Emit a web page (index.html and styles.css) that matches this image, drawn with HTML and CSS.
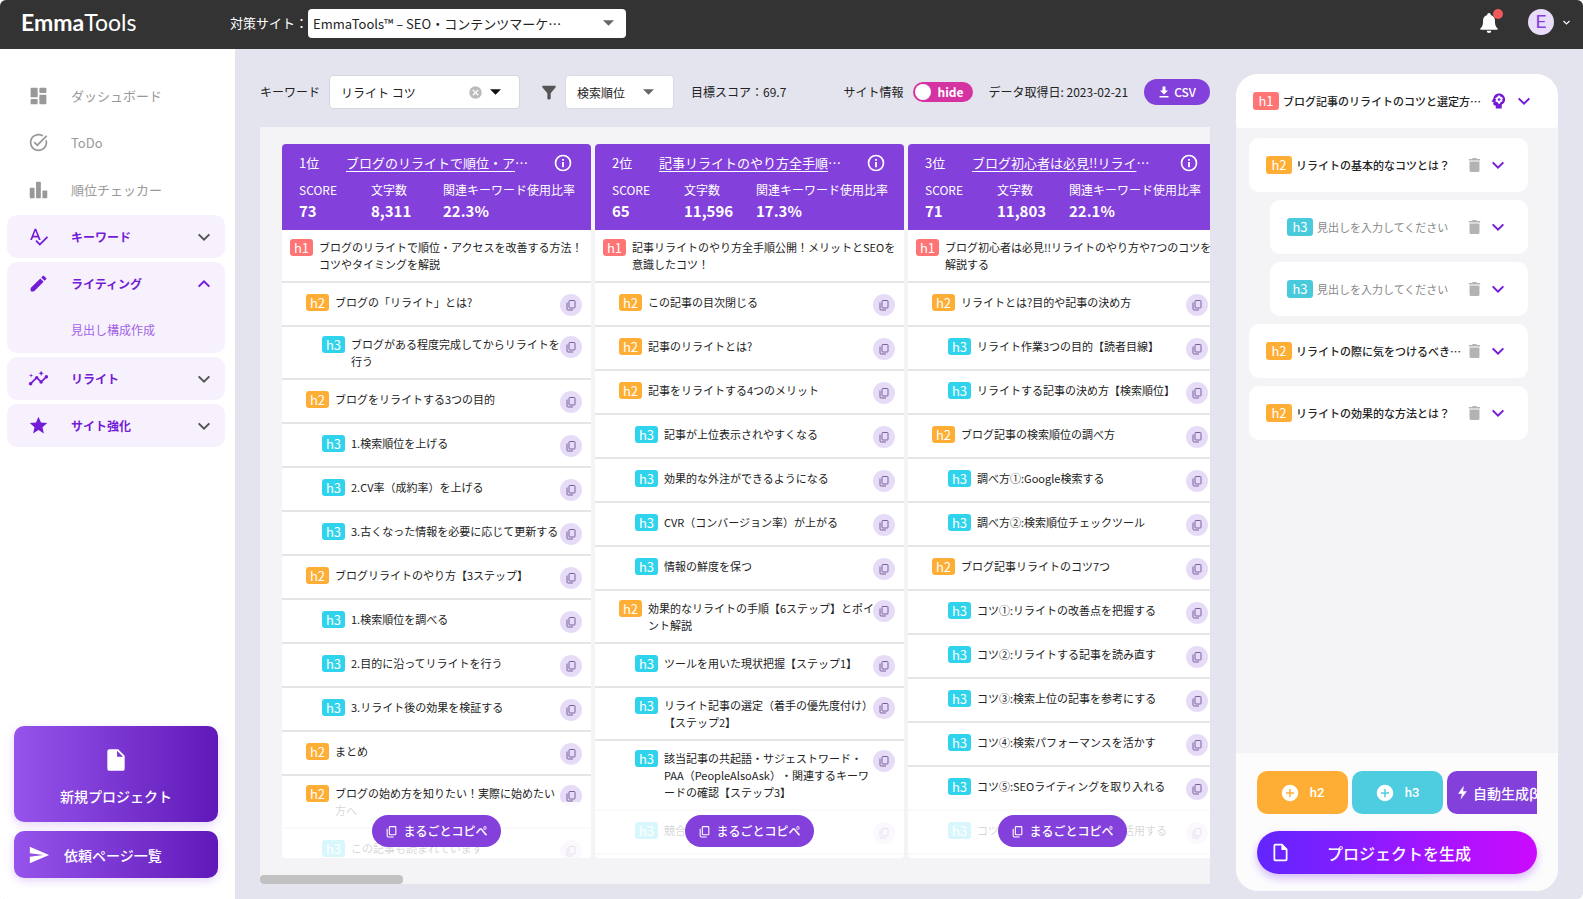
FILE: index.html
```html
<!DOCTYPE html>
<html lang="ja">
<head>
<meta charset="utf-8">
<title>EmmaTools</title>
<link rel="stylesheet" href="styles.css">
</head>
<body>
<svg class="sprite" aria-hidden="true">
  <symbol id="dash" viewBox="0 0 24 24"><rect x="3" y="3" width="8" height="11" rx="1"/><rect x="13" y="3" width="8" height="6" rx="1"/><rect x="3" y="16" width="8" height="6" rx="1"/><rect x="13" y="11" width="8" height="11" rx="1"/></symbol>
  <symbol id="task" viewBox="0 0 24 24"><path d="M22 5.18 10.59 16.6l-4.24-4.24 1.41-1.41 2.83 2.83 10-10L22 5.18zM19.79 10.22c.13.57.21 1.17.21 1.78 0 4.42-3.58 8-8 8s-8-3.58-8-8c0-4.42 3.58-8 8-8 1.58 0 3.04.46 4.28 1.25l1.44-1.44C16.1 2.67 14.13 2 12 2 6.48 2 2 6.48 2 12s4.48 10 10 10 10-4.48 10-10c0-1.19-.22-2.33-.6-3.39l-1.61 1.61z"/></symbol>
  <symbol id="bars" viewBox="0 0 24 24"><rect x="2" y="10" width="5.500" height="12" rx="1"/><rect x="9.200" y="3" width="5.500" height="19" rx="1"/><rect x="16.500" y="13" width="5.500" height="9" rx="1"/></symbol>
  <symbol id="spell" viewBox="0 0 24 24"><path d="M12.450 16h2.090L9.430 3H7.570L2.460 16h2.090l1.120-3h5.640l1.140 3zm-6.020-5L8.500 5.480 10.570 11H6.430zm15.160.590-8.090 8.090L9.830 16l-1.410 1.410 5.090 5.090L23 13l-1.410-1.410z"/></symbol>
  <symbol id="pencil" viewBox="0 0 24 24"><path d="M3 17.250V20a1 1 0 0 0 1 1h2.750L17.810 9.940l-3.750-3.750L3 17.250zM20.710 7.040a1 1 0 0 0 0-1.410l-2.340-2.340a1 1 0 0 0-1.410 0l-1.830 1.830 3.750 3.750 1.830-1.830z"/></symbol>
  <symbol id="insights" viewBox="0 0 24 24"><path d="M21 8c-1.45 0-2.26 1.44-1.93 2.51l-3.55 3.56c-.3-.09-.74-.09-1.04 0l-2.55-2.55C12.27 10.45 11.46 9 10 9c-1.45 0-2.27 1.44-1.93 2.52l-4.56 4.55C2.44 15.74 1 16.55 1 18c0 1.1.9 2 2 2 1.45 0 2.26-1.44 1.93-2.51l4.55-4.56c.3.09.74.09 1.04 0l2.55 2.55C12.73 16.55 13.54 18 15 18c1.45 0 2.27-1.44 1.93-2.52l3.56-3.55c1.07.33 2.51-.48 2.51-1.93 0-1.1-.9-2-2-2zM15 9l.94-2.07L18 6l-2.06-.93L15 3l-.92 2.07L12 6l2.08.93zM3.5 11 4 9l2-.5L4 8l-.5-2L3 8l-2 .5L3 9z"/></symbol>
  <symbol id="star" viewBox="0 0 24 24"><path d="M12 17.270 18.180 21l-1.640-7.030L22 9.240l-7.190-.610L12 2 9.190 8.630 2 9.240l5.460 4.730L5.820 21z"/></symbol>
  <symbol id="file" viewBox="0 0 24 24"><path d="M14 2H6a2 2 0 0 0-2 2v16a2 2 0 0 0 2 2h12a2 2 0 0 0 2-2V8l-6-6zm-1 7V3.500L18.500 9H13z"/></symbol>
  <symbol id="file-line" viewBox="0 0 24 24"><path fill-rule="evenodd" d="M14 2H6a2 2 0 0 0-2 2v16a2 2 0 0 0 2 2h12a2 2 0 0 0 2-2V8l-6-6zM6 4h7v5h5v11H6V4z"/></symbol>
  <symbol id="send" viewBox="0 0 24 24"><path d="M2 21l21-9L2 3v7l15 2-15 2z"/></symbol>
  <symbol id="copy" viewBox="0 0 24 24"><rect x="8" y="3" width="12" height="15" rx="1.500" fill="none" stroke="currentColor" stroke-width="2"/><path d="M4 7v13a2 2 0 0 0 2 2h10" fill="none" stroke="currentColor" stroke-width="2"/></symbol>
  <symbol id="info" viewBox="0 0 24 24"><circle cx="12" cy="12" r="10" fill="none" stroke="currentColor" stroke-width="2.200"/><path d="M10.800 10.500h2.400v7h-2.400zM10.800 6.500h2.400v2.400h-2.400z"/></symbol>
  <symbol id="down" viewBox="0 0 24 24"><path d="M4 8l8 8 8-8" fill="none" stroke="currentColor" stroke-width="3"/></symbol>
  <symbol id="up" viewBox="0 0 24 24"><path d="M4 16l8-8 8 8" fill="none" stroke="currentColor" stroke-width="3"/></symbol>
  <symbol id="tri" viewBox="0 0 12 6"><path d="M0 0h12L6 6z"/></symbol>
  <symbol id="clear" viewBox="0 0 24 24"><path d="M12 2a10 10 0 1 0 0 20 10 10 0 0 0 0-20zm5 13.600L15.600 17 12 13.400 8.400 17 7 15.600l3.600-3.600L7 8.400 8.400 7l3.600 3.600L15.600 7 17 8.400 13.400 12z"/></symbol>
  <symbol id="filter" viewBox="0 0 24 24"><path d="M2 2h20v2l-7.500 9v8.500L12 23l-2.500-1.500V13L2 4z"/></symbol>
  <symbol id="download" viewBox="0 0 24 24"><path d="M9 1h6v8h5l-8 8-8-8h5zM3 20h18v3H3z"/></symbol>
  <symbol id="bolt" viewBox="0 0 24 24"><path d="M14 1 5 14h6l-2 9 10-13h-6z"/></symbol>
  <symbol id="plus" viewBox="0 0 24 24"><path d="M12 1a11 11 0 1 0 0 22 11 11 0 0 0 0-22zm5.500 12H13v4.500h-2V13H6.500v-2H11V6.500h2V11h4.500z"/></symbol>
  <symbol id="trash" viewBox="0 0 24 24"><path d="M20 3.500h-4.500L14.500 2h-5l-1 1.500H4V5.500h16zM5 20a2 2 0 0 0 2 2h10a2 2 0 0 0 2-2V7H5z"/></symbol>
  <symbol id="bell" viewBox="0 0 24 24"><path d="M12 1a2 2 0 0 0-2 2v.400A6.500 6.500 0 0 0 5.500 10c0 4-.8 6-2.500 7.500-.8.700-.8 1.900.3 1.900h17.400c1.100 0 1.100-1.200.3-1.900-1.700-1.500-2.500-3.500-2.500-7.500A6.500 6.500 0 0 0 14 3.400V3a2 2 0 0 0-2-2zM9.500 20.500h5a2.500 2.500 0 0 1-5 0z"/></symbol>
  <symbol id="brain" viewBox="0 0 24 24"><path d="M13.500 2C9.400 2 6 5 5.800 9L3.600 12.200c-.3.400 0 .9.400.9h1.800V16c0 1.100.9 2 2 2H9v4h8v-5.300c2.700-1.300 4.500-3.800 4.500-6.700 0-4.400-3.600-8-8-8z"/><g fill="#fff"><circle cx="13.500" cy="10" r="4.200"/><path d="M12.300 4.500h2.400v11h-2.400zM8 9l.5-1 9.500 2.900-.4 1.300zM17.800 7.300l.8 1.500-9.400 4.400-.8-1.400z"/></g><circle cx="13.500" cy="10" r="1.800"/></symbol>
</svg>
<div class="app">
  <header class="topbar">
    <div class="logo"><b>Emma</b>Tools</div>
    <div class="site">
      <label for="site">対策サイト：</label>
      <div class="pick pick-site">
        <select id="site"><option>EmmaTools™ – SEO・コンテンツマーケ…</option></select>
        <svg class="caret"><use href="#tri"/></svg>
      </div>
    </div>
    <div class="account">
      <button class="bell" aria-label="通知"><svg><use href="#bell"/></svg><span class="dot"></span></button>
      <button class="user" aria-label="アカウント"><span class="avatar">E</span><svg><use href="#down"/></svg></button>
    </div>
  </header>
  <div class="body">
    <aside class="sidebar">
      <nav class="menu">
        <a class="item" href="#"><svg><use href="#dash"/></svg><span>ダッシュボード</span></a>
        <a class="item" href="#"><svg><use href="#task"/></svg><span>ToDo</span></a>
        <a class="item" href="#"><svg><use href="#bars"/></svg><span>順位チェッカー</span></a>
        <div class="group"><button class="item"><svg><use href="#spell"/></svg><span>キーワード</span><svg class="arrow"><use href="#down"/></svg></button></div>
        <div class="group"><button class="item open"><svg><use href="#pencil"/></svg><span>ライティング</span><svg class="arrow"><use href="#up"/></svg></button><a class="sub" href="#">見出し構成作成</a></div>
        <div class="group"><button class="item"><svg><use href="#insights"/></svg><span>リライト</span><svg class="arrow"><use href="#down"/></svg></button></div>
        <div class="group"><button class="item"><svg><use href="#star"/></svg><span>サイト強化</span><svg class="arrow"><use href="#down"/></svg></button></div>
      </nav>
      <div class="side-actions">
        <button class="grad new-project"><svg><use href="#file"/></svg><span>新規プロジェクト</span></button>
        <button class="grad request"><svg><use href="#send"/></svg><span>依頼ページ一覧</span></button>
      </div>
    </aside>
    <main class="main">
      <div class="toolbar">
        <label for="kw">キーワード</label>
        <div class="kw-box"><input id="kw" type="text" value="リライト コツ"><button class="clear" aria-label="消去"><svg><use href="#clear"/></svg></button><svg class="caret"><use href="#tri"/></svg></div>
        <svg class="filter"><use href="#filter"/></svg>
        <div class="pick pick-sort"><select aria-label="並び順"><option>検索順位</option></select><svg class="caret"><use href="#tri"/></svg></div>
        <span class="target">目標スコア：69.7</span>
        <div class="tool-right">
          <label class="switch"><span>サイト情報</span><input type="checkbox" role="switch"><span class="track"><span class="knob"></span>hide</span></label>
          <span>データ取得日: 2023-02-21</span>
          <button class="csv"><svg><use href="#download"/></svg>CSV</button>
        </div>
      </div>
      <section class="board">
        <div class="columns">
          <article class="col">
            <header class="col-head">
              <div class="rank"><span>1位</span><span class="title"><a href="#">ブログのリライトで順位・ア</a>…</span><svg><use href="#info"/></svg></div>
              <dl class="stats"><div><dt>SCORE</dt><dd>73</dd></div><div><dt>文字数</dt><dd>8,311</dd></div><div><dt>関連キーワード使用比率</dt><dd>22.3%</dd></div></dl>
            </header>
            <ul class="rows">
              <li class="h1"><b class="tag">h1</b><p>ブログのリライトで順位・アクセスを改善する方法！<br>コツやタイミングを解説</p></li>
              <li class="h2"><b class="tag">h2</b><p>ブログの「リライト」とは?</p><button class="copy" aria-label="コピー"><svg><use href="#copy"/></svg></button></li>
              <li class="h3"><b class="tag">h3</b><p>ブログがある程度完成してからリライトを<br>行う</p><button class="copy" aria-label="コピー"><svg><use href="#copy"/></svg></button></li>
              <li class="h2"><b class="tag">h2</b><p>ブログをリライトする3つの目的</p><button class="copy" aria-label="コピー"><svg><use href="#copy"/></svg></button></li>
              <li class="h3"><b class="tag">h3</b><p>1.検索順位を上げる</p><button class="copy" aria-label="コピー"><svg><use href="#copy"/></svg></button></li>
              <li class="h3"><b class="tag">h3</b><p>2.CV率（成約率）を上げる</p><button class="copy" aria-label="コピー"><svg><use href="#copy"/></svg></button></li>
              <li class="h3"><b class="tag">h3</b><p>3.古くなった情報を必要に応じて更新する</p><button class="copy" aria-label="コピー"><svg><use href="#copy"/></svg></button></li>
              <li class="h2"><b class="tag">h2</b><p>ブログリライトのやり方【3ステップ】</p><button class="copy" aria-label="コピー"><svg><use href="#copy"/></svg></button></li>
              <li class="h3"><b class="tag">h3</b><p>1.検索順位を調べる</p><button class="copy" aria-label="コピー"><svg><use href="#copy"/></svg></button></li>
              <li class="h3"><b class="tag">h3</b><p>2.目的に沿ってリライトを行う</p><button class="copy" aria-label="コピー"><svg><use href="#copy"/></svg></button></li>
              <li class="h3"><b class="tag">h3</b><p>3.リライト後の効果を検証する</p><button class="copy" aria-label="コピー"><svg><use href="#copy"/></svg></button></li>
              <li class="h2"><b class="tag">h2</b><p>まとめ</p><button class="copy" aria-label="コピー"><svg><use href="#copy"/></svg></button></li>
              <li class="h2"><b class="tag">h2</b><p>ブログの始め方を知りたい！実際に始めたい<br>方へ</p><button class="copy" aria-label="コピー"><svg><use href="#copy"/></svg></button></li>
              <li class="h3"><b class="tag">h3</b><p>この記事も読まれています</p><button class="copy" aria-label="コピー"><svg><use href="#copy"/></svg></button></li>
            </ul>
            <div class="veil"><button class="copy-all"><svg><use href="#copy"/></svg>まるごとコピペ</button></div>
          </article>
          <article class="col">
            <header class="col-head">
              <div class="rank"><span>2位</span><span class="title"><a href="#">記事リライトのやり方全手順</a>…</span><svg><use href="#info"/></svg></div>
              <dl class="stats"><div><dt>SCORE</dt><dd>65</dd></div><div><dt>文字数</dt><dd>11,596</dd></div><div><dt>関連キーワード使用比率</dt><dd>17.3%</dd></div></dl>
            </header>
            <ul class="rows">
              <li class="h1"><b class="tag">h1</b><p>記事リライトのやり方全手順公開！メリットとSEOを<br>意識したコツ！</p></li>
              <li class="h2"><b class="tag">h2</b><p>この記事の目次閉じる</p><button class="copy" aria-label="コピー"><svg><use href="#copy"/></svg></button></li>
              <li class="h2"><b class="tag">h2</b><p>記事のリライトとは?</p><button class="copy" aria-label="コピー"><svg><use href="#copy"/></svg></button></li>
              <li class="h2"><b class="tag">h2</b><p>記事をリライトする4つのメリット</p><button class="copy" aria-label="コピー"><svg><use href="#copy"/></svg></button></li>
              <li class="h3"><b class="tag">h3</b><p>記事が上位表示されやすくなる</p><button class="copy" aria-label="コピー"><svg><use href="#copy"/></svg></button></li>
              <li class="h3"><b class="tag">h3</b><p>効果的な外注ができるようになる</p><button class="copy" aria-label="コピー"><svg><use href="#copy"/></svg></button></li>
              <li class="h3"><b class="tag">h3</b><p>CVR（コンバージョン率）が上がる</p><button class="copy" aria-label="コピー"><svg><use href="#copy"/></svg></button></li>
              <li class="h3"><b class="tag">h3</b><p>情報の鮮度を保つ</p><button class="copy" aria-label="コピー"><svg><use href="#copy"/></svg></button></li>
              <li class="h2"><b class="tag">h2</b><p>効果的なリライトの手順【6ステップ】とポイ<br>ント解説</p><button class="copy" aria-label="コピー"><svg><use href="#copy"/></svg></button></li>
              <li class="h3"><b class="tag">h3</b><p>ツールを用いた現状把握【ステップ1】</p><button class="copy" aria-label="コピー"><svg><use href="#copy"/></svg></button></li>
              <li class="h3"><b class="tag">h3</b><p>リライト記事の選定（着手の優先度付け）<br>【ステップ2】</p><button class="copy" aria-label="コピー"><svg><use href="#copy"/></svg></button></li>
              <li class="h3"><b class="tag">h3</b><p>該当記事の共起語・サジェストワード・<br>PAA（PeopleAlsoAsk）・関連するキーワ<br>ードの確認【ステップ3】</p><button class="copy" aria-label="コピー"><svg><use href="#copy"/></svg></button></li>
              <li class="h3"><b class="tag">h3</b><p>競合ページの分析</p><button class="copy" aria-label="コピー"><svg><use href="#copy"/></svg></button></li>
              <li class="h3"></li>
            </ul>
            <div class="veil"><button class="copy-all"><svg><use href="#copy"/></svg>まるごとコピペ</button></div>
          </article>
          <article class="col">
            <header class="col-head">
              <div class="rank"><span>3位</span><span class="title"><a href="#">ブログ初心者は必見!!リライ</a>…</span><svg><use href="#info"/></svg></div>
              <dl class="stats"><div><dt>SCORE</dt><dd>71</dd></div><div><dt>文字数</dt><dd>11,803</dd></div><div><dt>関連キーワード使用比率</dt><dd>22.1%</dd></div></dl>
            </header>
            <ul class="rows">
              <li class="h1"><b class="tag">h1</b><p>ブログ初心者は必見!!リライトのやり方や7つのコツを<br>解説する</p></li>
              <li class="h2"><b class="tag">h2</b><p>リライトとは?目的や記事の決め方</p><button class="copy" aria-label="コピー"><svg><use href="#copy"/></svg></button></li>
              <li class="h3"><b class="tag">h3</b><p>リライト作業3つの目的【読者目線】</p><button class="copy" aria-label="コピー"><svg><use href="#copy"/></svg></button></li>
              <li class="h3"><b class="tag">h3</b><p>リライトする記事の決め方【検索順位】</p><button class="copy" aria-label="コピー"><svg><use href="#copy"/></svg></button></li>
              <li class="h2"><b class="tag">h2</b><p>ブログ記事の検索順位の調べ方</p><button class="copy" aria-label="コピー"><svg><use href="#copy"/></svg></button></li>
              <li class="h3"><b class="tag">h3</b><p>調べ方①:Google検索する</p><button class="copy" aria-label="コピー"><svg><use href="#copy"/></svg></button></li>
              <li class="h3"><b class="tag">h3</b><p>調べ方②:検索順位チェックツール</p><button class="copy" aria-label="コピー"><svg><use href="#copy"/></svg></button></li>
              <li class="h2"><b class="tag">h2</b><p>ブログ記事リライトのコツ7つ</p><button class="copy" aria-label="コピー"><svg><use href="#copy"/></svg></button></li>
              <li class="h3"><b class="tag">h3</b><p>コツ①:リライトの改善点を把握する</p><button class="copy" aria-label="コピー"><svg><use href="#copy"/></svg></button></li>
              <li class="h3"><b class="tag">h3</b><p>コツ②:リライトする記事を読み直す</p><button class="copy" aria-label="コピー"><svg><use href="#copy"/></svg></button></li>
              <li class="h3"><b class="tag">h3</b><p>コツ③:検索上位の記事を参考にする</p><button class="copy" aria-label="コピー"><svg><use href="#copy"/></svg></button></li>
              <li class="h3"><b class="tag">h3</b><p>コツ④:検索パフォーマンスを活かす</p><button class="copy" aria-label="コピー"><svg><use href="#copy"/></svg></button></li>
              <li class="h3"><b class="tag">h3</b><p>コツ⑤:SEOライティングを取り入れる</p><button class="copy" aria-label="コピー"><svg><use href="#copy"/></svg></button></li>
              <li class="h3"><b class="tag">h3</b><p>コツ⑥:サーチコンソールなど活用する</p><button class="copy" aria-label="コピー"><svg><use href="#copy"/></svg></button></li>
              <li class="h3"></li>
            </ul>
            <div class="veil"><button class="copy-all"><svg><use href="#copy"/></svg>まるごとコピペ</button></div>
          </article>
        </div>
        <div class="thumb"></div>
      </section>
    </main>
    <aside class="outline">
      <div class="outline-head">
        <label class="tag h1" for="o1">h1</label><input id="o1" type="text" value="ブログ記事のリライトのコツと選定方…">
        <button class="ai" aria-label="AI"><svg><use href="#brain"/></svg></button>
        <button class="toggle" aria-label="開く"><svg><use href="#down"/></svg></button>
      </div>
      <div class="cards">
        <div class="card"><label class="tag h2" for="o2">h2</label><input id="o2" type="text" value="リライトの基本的なコツとは？"><button class="trash" aria-label="削除"><svg><use href="#trash"/></svg></button><button class="toggle" aria-label="開く"><svg><use href="#down"/></svg></button></div>
        <div class="card nested"><label class="tag h3" for="o3">h3</label><input id="o3" type="text" placeholder="見出しを入力してください"><button class="trash" aria-label="削除"><svg><use href="#trash"/></svg></button><button class="toggle" aria-label="開く"><svg><use href="#down"/></svg></button></div>
        <div class="card nested"><label class="tag h3" for="o4">h3</label><input id="o4" type="text" placeholder="見出しを入力してください"><button class="trash" aria-label="削除"><svg><use href="#trash"/></svg></button><button class="toggle" aria-label="開く"><svg><use href="#down"/></svg></button></div>
        <div class="card"><label class="tag h2" for="o5">h2</label><input id="o5" type="text" value="リライトの際に気をつけるべき…"><button class="trash" aria-label="削除"><svg><use href="#trash"/></svg></button><button class="toggle" aria-label="開く"><svg><use href="#down"/></svg></button></div>
        <div class="card"><label class="tag h2" for="o6">h2</label><input id="o6" type="text" value="リライトの効果的な方法とは？"><button class="trash" aria-label="削除"><svg><use href="#trash"/></svg></button><button class="toggle" aria-label="開く"><svg><use href="#down"/></svg></button></div>
      </div>
      <div class="outline-foot">
        <div class="adders">
          <button class="add add-h2"><svg><use href="#plus"/></svg>h2</button>
          <button class="add add-h3"><svg><use href="#plus"/></svg>h3</button>
          <button class="add auto"><svg><use href="#bolt"/></svg>自動生成β</button>
        </div>
        <button class="generate"><svg><use href="#file-line"/></svg><span>プロジェクトを生成</span></button>
      </div>
    </aside>
  </div>
</div>
</body>
</html>
```

FILE: styles.css
```css
:root {
  --purple: #8340da;
  --deep: #741bd6;
  --bg: #e4e4ee;
  --soft: #f4f4f7;
  --h1: #ff7474;
  --h2: #ffae35;
  --h3: #2fd4ec;
}
* { box-sizing: border-box; }
body {
  margin: 0;
  background: #fff;
  color: #222;
  font: 400 12px/18px "Noto Sans CJK JP", sans-serif;
  text-spacing-trim: space-all;
}
button, input, select { font: inherit; color: inherit; }
button { border: 0; padding: 0; background: none; cursor: pointer; white-space: nowrap; }
a { color: inherit; }
svg { display: block; flex: none; fill: currentColor; }
.sprite { display: none; }
.app {
  display: flex;
  flex-direction: column;
  height: 100vh;
  border-radius: 6px;
  overflow: hidden;
  background: var(--bg);
}

/* Top bar */
.topbar {
  display: flex;
  align-items: center;
  flex: none;
  height: 49px;
  padding: 0 12px 3px 21px;
  background: #333;
  color: #fff;
}
.logo { width: 209px; padding-bottom: 2px; font: 400 23px/24px Lato, sans-serif; }
.logo b { font-weight: 700; }
.site { display: flex; align-items: center; font-size: 13px; }
.pick { position: relative; display: flex; align-items: center; background: #fff; color: #222; border-radius: 4px; }
.pick select {
  appearance: none;
  width: 100%;
  height: 100%;
  border: 0;
  background: none;
  padding: 2px 24px 0 5px;
}
.pick .caret { position: absolute; right: 12px; width: 11px; height: 6px; color: #666; pointer-events: none; }
.pick-site { width: 318px; height: 29px; }
.account { display: flex; align-items: center; gap: 28px; margin-left: auto; }
.bell { position: relative; }
.bell svg { width: 22px; height: 24px; }
.dot { position: absolute; top: -2px; right: -3px; width: 10px; height: 10px; border-radius: 50%; background: #f05a5a; }
.user { display: flex; align-items: center; gap: 8px; padding-bottom: 2px; }
.user svg { width: 9px; height: 9px; }
.avatar { width: 26px; border-radius: 50%; background: #e9dcf9; color: var(--purple); font: 400 19px/26px Roboto, sans-serif; }

.body { display: flex; flex: 1; min-height: 0; }

/* Sidebar */
.sidebar {
  display: flex;
  flex-direction: column;
  justify-content: space-between;
  flex: none;
  width: 235px;
  padding: 25px 10px 21px 7px;
  background: #fff;
}
.menu { display: flex; flex-direction: column; gap: 4px; }
.item {
  display: flex;
  align-items: center;
  gap: 22px;
  width: 100%;
  height: 43px;
  padding: 0 13px 0 21px;
  color: #999;
  font-size: 13px;
  text-align: left;
  text-decoration: none;
}
.item svg { width: 21px; height: 21px; }
.group { border-radius: 10px; background: #f7f1fe; }
.group .item { color: var(--deep); font-size: 12px; font-weight: 700; }
.item .arrow { width: 16px; height: 16px; margin-left: auto; color: #555; }
.item.open .arrow { color: var(--deep); }
.sub { display: block; padding: 16px 0 14px 64px; color: #a264e2; text-decoration: none; }
.side-actions { display: flex; flex-direction: column; gap: 9px; padding: 0 7px; }
.grad {
  display: flex;
  align-items: center;
  width: 100%;
  border-radius: 10px;
  background: linear-gradient(90deg, #9654ec, #6019b8);
  box-shadow: 0 3px 8px #c9a6f577;
  color: #fff;
  font-size: 14px;
  font-weight: 500;
}
.new-project { flex-direction: column; gap: 14px; height: 96px; padding-top: 21px; }
.new-project svg { width: 26px; height: 26px; }
.request { gap: 14px; height: 47px; padding-left: 14px; }
.request svg { width: 22px; height: 22px; }

/* Main area */
.main { display: flex; flex-direction: column; flex: 1; min-width: 0; padding: 26px 26px 15px 25px; }
.toolbar { display: flex; align-items: center; flex: none; height: 34px; }
.kw-box {
  display: flex;
  align-items: center;
  width: 191px;
  height: 34px;
  margin: 0 21px 0 9px;
  padding: 0 18px 0 10px;
  border: 1px solid #d3d5df;
  border-radius: 4px;
  background: #fff;
}
.kw-box input { flex: 1; min-width: 0; border: 0; padding: 2px 1px 0; background: none; }
.clear svg { width: 15px; height: 15px; color: #bbb; }
.kw-box .caret { width: 11px; height: 6px; margin-left: 7px; color: #111; }
.filter { width: 16px; height: 17px; color: #555; }
.pick-sort { width: 109px; height: 34px; margin: 0 17px 0 8px; border: 1px solid #dadce4; }
.pick-sort select { padding-left: 11px; }
.pick-sort .caret { right: 19px; }
.tool-right { display: flex; align-items: center; gap: 16px; margin-left: auto; }
.switch { display: flex; align-items: center; gap: 9px; }
.switch input { position: absolute; opacity: 0; }
.track {
  display: flex;
  align-items: center;
  gap: 7px;
  width: 60px;
  height: 20px;
  padding: 0 2px;
  border-radius: 10px;
  background: #d533a2;
  color: #fff;
  font-weight: 700;
}
.knob { width: 16px; height: 16px; border-radius: 50%; background: #fff; }
.csv {
  display: flex;
  align-items: center;
  gap: 4px;
  height: 26px;
  padding: 0 14px;
  border-radius: 13px;
  background: var(--purple);
  color: #fff;
  font-weight: 500;
}
.csv svg { width: 12px; height: 12px; }

/* Competitor board */
.board { display: flex; flex-direction: column; flex: 1; min-height: 0; margin-top: 18px; background: var(--soft); overflow: hidden; }
.columns { display: flex; flex: 1; gap: 4px; min-height: 0; padding: 17px 0 17px 22px; }
.thumb { flex: none; width: 15%; height: 9px; border-radius: 4px; background: #c1c1c1; }
.col { position: relative; flex: 0 0 309px; overflow: hidden; border-radius: 4px; background: #fff; }
.col-head { height: 86px; padding: 10px 16px 8px 17px; background: var(--purple); color: #fff; }
.rank { display: flex; align-items: center; font-size: 13px; }
.rank > span:first-child { width: 47px; }
.title { flex: 1; white-space: nowrap; }
.title a { text-underline-offset: 3px; }
.rank svg { width: 18px; height: 18px; margin-right: 3px; }
.stats { display: flex; margin: 9px 0 0; white-space: nowrap; }
.stats > div { flex: none; width: 72px; }
.stats dd { margin: 1px 0 0; font-size: 15px; line-height: 21px; font-weight: 700; }
.rows { margin: 0; padding: 0; list-style: none; font-size: 11px; line-height: 17px; }
.rows li {
  display: grid;
  grid-template-columns: 23px 1fr 22px;
  column-gap: 6px;
  align-content: center;
  align-items: start;
  min-height: 44px;
  padding: 9px 9px 8px 8px;
  border-bottom: 2px solid #e5e5e6;
}
.rows .h2 { padding-left: 24px; }
.rows .h3 { padding-left: 40px; }
.rows p { width: 0; margin: 0; white-space: nowrap; }
.tag { border-radius: 3px; color: #fff; font-size: 13px; font-weight: 400; line-height: 17px; text-align: center; background: var(--h1); }
.h2 .tag, .tag.h2 { background: var(--h2); }
.h3 .tag { background: var(--h3); }
.tag.h3 { background: #49cadc; }
.copy { display: grid; place-items: center; width: 22px; height: 22px; border-radius: 50%; background: #e7dcf8; color: #77619a; }
.copy svg { width: 12px; height: 12px; }
.veil {
  position: absolute;
  inset: auto 0 0;
  display: flex;
  justify-content: center;
  align-items: flex-start;
  height: 56px;
  padding-top: 13px;
  background: #ffffffd0;
}
.copy-all {
  display: flex;
  align-items: center;
  gap: 5px;
  height: 32px;
  padding: 0 13px;
  border-radius: 16px;
  background: var(--purple);
  color: #fff;
  font-weight: 500;
}
.copy-all svg { width: 13px; height: 13px; }

/* Outline panel */
.outline {
  display: flex;
  flex-direction: column;
  flex: none;
  width: 322px;
  margin: 25px 25px 8px 0;
  border-radius: 22px;
  overflow: hidden;
  background: var(--soft);
  font-size: 11px;
}
.outline input { flex: 1; min-width: 0; border: 0; padding: 0; margin-left: 4px; background: none; font-weight: 500; }
.outline input::placeholder { color: #888; font-weight: 400; opacity: 1; }
.outline-head, .card { display: flex; align-items: center; background: #fff; height: 54px; }
.outline-head { flex: none; padding: 0 26px 0 17px; border-radius: 0 0 4px 4px; }
.outline .tag { width: 26px; line-height: 18px; }
.ai { color: var(--deep); }
.ai svg { width: 18px; height: 18px; }
.toggle { color: var(--deep); }
.toggle svg { width: 16px; height: 16px; }
.outline-head .toggle { margin-left: 9px; }
.card .toggle { margin-left: 7px; }
.trash { color: #b3b3b3; }
.trash svg { width: 17px; height: 18px; }
.cards { display: flex; flex-direction: column; flex: 1; gap: 8px; padding: 10px 30px 0 13px; }
.card { padding: 0 22px 0 17px; border-radius: 10px; }
.nested { margin-left: 21px; }
.outline-foot { padding: 18px 21px 17px; background: #fcfcfd; }
.adders { display: flex; gap: 4px; overflow: hidden; }
.add {
  display: flex;
  align-items: center;
  justify-content: center;
  flex: 0 0 91px;
  gap: 11px;
  height: 43px;
  border-radius: 10px;
  color: #fff;
  font: 500 13px/18px Roboto, "Noto Sans CJK JP", sans-serif;
}
.add svg { width: 18px; height: 18px; }
.add-h2 { background: var(--h2); }
.add-h3 { background: #4dcddf; }
.add.auto { flex-basis: 112px; justify-content: flex-start; gap: 3px; padding-left: 8px; background: var(--purple); font: 500 14px/20px "Noto Sans CJK JP", sans-serif; }
.auto svg { width: 15px; height: 15px; }
.generate {
  display: flex;
  align-items: center;
  width: 100%;
  height: 43px;
  margin-top: 17px;
  padding: 0 30px 0 13px;
  border-radius: 22px;
  background: linear-gradient(90deg, #6126ff, #cc0aff);
  box-shadow: 0 4px 8px #b98af599;
  color: #fff;
  font-size: 16px;
  font-weight: 500;
}
.generate svg { width: 21px; height: 21px; }
.generate span { flex: 1; }
```
